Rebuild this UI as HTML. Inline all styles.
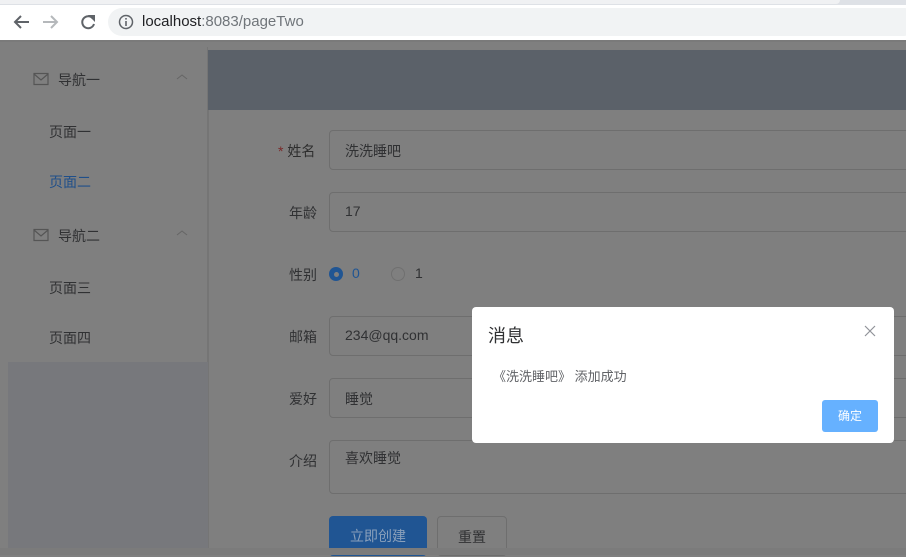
<!DOCTYPE html>
<html><head><meta charset="utf-8"><style>
*{margin:0;padding:0;box-sizing:border-box}
body{width:906px;height:555px;overflow:hidden;background:#7f7f7f;font-family:"Liberation Sans","Noto Sans CJK SC",sans-serif;position:relative}
.abs{position:absolute}
.t{font-size:14px;color:#303133}
</style></head><body>
<div class="abs" style="left:0;top:0;width:906px;height:5px;background:#dee1e6"></div>
<div class="abs" style="left:0;top:0;width:840px;height:4px;background:#f0f1f3;border-radius:0 0 4px 0"></div>
<div class="abs" style="left:0;top:5px;width:906px;height:35px;background:#fff"></div>
<svg class="abs" style="left:12px;top:12px" width="90" height="20" viewBox="0 0 90 20">
<path d="M17 10H4M9 4L3 10l6 6" stroke="#5f6368" stroke-width="2" fill="none"/>
<path d="M31 10h13M39 4l6 6-6 6" stroke="#b5b8bb" stroke-width="2" fill="none"/>
<path d="M81 6.5A6 6 0 1 0 82 12" stroke="#5f6368" stroke-width="2" fill="none"/><path d="M76 3h7v7z" fill="#5f6368"/>
</svg>
<div class="abs" style="left:108px;top:8px;width:810px;height:28px;background:#f1f3f4;border-radius:14px"></div>
<svg class="abs" style="left:118px;top:14px" width="16" height="16"><circle cx="8" cy="8" r="6.5" stroke="#5f6368" stroke-width="1.5" fill="none"/><rect x="7.2" y="7" width="1.6" height="5" fill="#5f6368"/><rect x="7.2" y="4" width="1.6" height="1.6" fill="#5f6368"/></svg>
<div class="abs" style="left:142px;top:13px;font-size:15px;color:#202124">localhost<span style="color:#70757a">:8083/pageTwo</span></div>

<div class="abs" style="left:0;top:40px;width:906px;height:2px;background:#7a7a7a"></div>
<div class="abs" style="left:8px;top:47px;width:200px;height:315px;background:#7f7f7f;border-right:1px solid #757575"></div>
<div class="abs" style="left:8px;top:362px;width:200px;height:186px;background:#77787c"></div>
<div class="abs" style="left:208px;top:50px;width:698px;height:60px;background:#5b6169"></div>
<div class="abs" style="left:208px;top:110px;width:1px;height:445px;background:#757575"></div>

<svg class="abs" style="left:33px;top:72px" width="16" height="14"><rect x="1" y="1.5" width="14" height="11" stroke="#555" stroke-width="1.2" fill="none"/><path d="M1 2l7 6 7-6" stroke="#555" stroke-width="1.2" fill="none"/></svg>
<div class="abs t" style="left:58px;top:70px">导航一</div>
<svg class="abs" style="left:176px;top:73px" width="12" height="8"><path d="M1 6l5-4 5 4" stroke="#666" fill="none"/></svg>
<div class="abs t" style="left:49px;top:122px">页面一</div>
<div class="abs t" style="left:49px;top:172px;color:#1f4f8a">页面二</div>
<svg class="abs" style="left:33px;top:228px" width="16" height="14"><rect x="1" y="1.5" width="14" height="11" stroke="#555" stroke-width="1.2" fill="none"/><path d="M1 2l7 6 7-6" stroke="#555" stroke-width="1.2" fill="none"/></svg>
<div class="abs t" style="left:58px;top:226px">导航二</div>
<svg class="abs" style="left:176px;top:229px" width="12" height="8"><path d="M1 6l5-4 5 4" stroke="#666" fill="none"/></svg>
<div class="abs t" style="left:49px;top:278px">页面三</div>
<div class="abs t" style="left:49px;top:328px">页面四</div>

<div class="abs t" style="left:278px;top:141px;color:#2e2e2e"><span style="color:#7a2a2a">*</span> 姓名</div>
<div class="abs" style="left:329px;top:130px;width:590px;height:40px;border:1px solid #6e6e6e;border-radius:4px"></div>
<div class="abs t" style="left:345px;top:141px">洗洗睡吧</div>
<div class="abs t" style="left:289px;top:203px">年龄</div>
<div class="abs" style="left:329px;top:192px;width:590px;height:40px;border:1px solid #6e6e6e;border-radius:4px"></div>
<div class="abs t" style="left:345px;top:203px">17</div>
<div class="abs t" style="left:289px;top:265px">性别</div>
<div class="abs" style="left:329px;top:267px;width:14px;height:14px;border-radius:50%;background:#205593"><div style="margin:4.5px;width:5px;height:5px;border-radius:50%;background:#7f7f7f"></div></div>
<div class="abs t" style="left:352px;top:265px;color:#205593">0</div>
<div class="abs" style="left:391px;top:267px;width:14px;height:14px;border-radius:50%;border:1px solid #707070"></div>
<div class="abs t" style="left:415px;top:265px">1</div>
<div class="abs t" style="left:289px;top:327px">邮箱</div>
<div class="abs" style="left:329px;top:316px;width:590px;height:40px;border:1px solid #6e6e6e;border-radius:4px"></div>
<div class="abs t" style="left:345px;top:327px">234@qq.com</div>
<div class="abs t" style="left:289px;top:389px">爱好</div>
<div class="abs" style="left:329px;top:378px;width:590px;height:40px;border:1px solid #6e6e6e;border-radius:4px"></div>
<div class="abs t" style="left:345px;top:389px">睡觉</div>
<div class="abs t" style="left:289px;top:451px">介绍</div>
<div class="abs" style="left:329px;top:440px;width:590px;height:54px;border:1px solid #6e6e6e;border-radius:4px"></div>
<div class="abs t" style="left:345px;top:448px">喜欢睡觉</div>
<div class="abs" style="left:329px;top:516px;width:98px;height:40px;background:#205593;border-radius:4px;color:#8aa0bb;font-size:14px;text-align:center;line-height:40px">立即创建</div>
<div class="abs" style="left:437px;top:516px;width:70px;height:40px;border:1px solid #6e6e6e;border-radius:4px;font-size:14px;color:#303133;text-align:center;line-height:40px">重置</div>
<div class="abs" style="left:0;top:548px;width:906px;height:7px;background:#7b7b7b"></div>

<div class="abs" style="left:472px;top:307px;width:422px;height:136px;background:#fff;border-radius:4px"></div>
<div class="abs" style="left:488px;top:322px;font-size:18px;color:#303133">消息</div>
<svg class="abs" style="left:864px;top:325px" width="12" height="12"><path d="M1 1l10 10M11 1L1 11" stroke="#909399" stroke-width="1.2"/></svg>
<div class="abs" style="left:493px;top:366px;font-size:13px;color:#606266">《洗洗睡吧》 添加成功</div>
<div class="abs" style="left:822px;top:400px;width:56px;height:32px;background:#66b1ff;border-radius:3px;color:#fff;font-size:12px;text-align:center;line-height:32px">确定</div>
</body></html>
